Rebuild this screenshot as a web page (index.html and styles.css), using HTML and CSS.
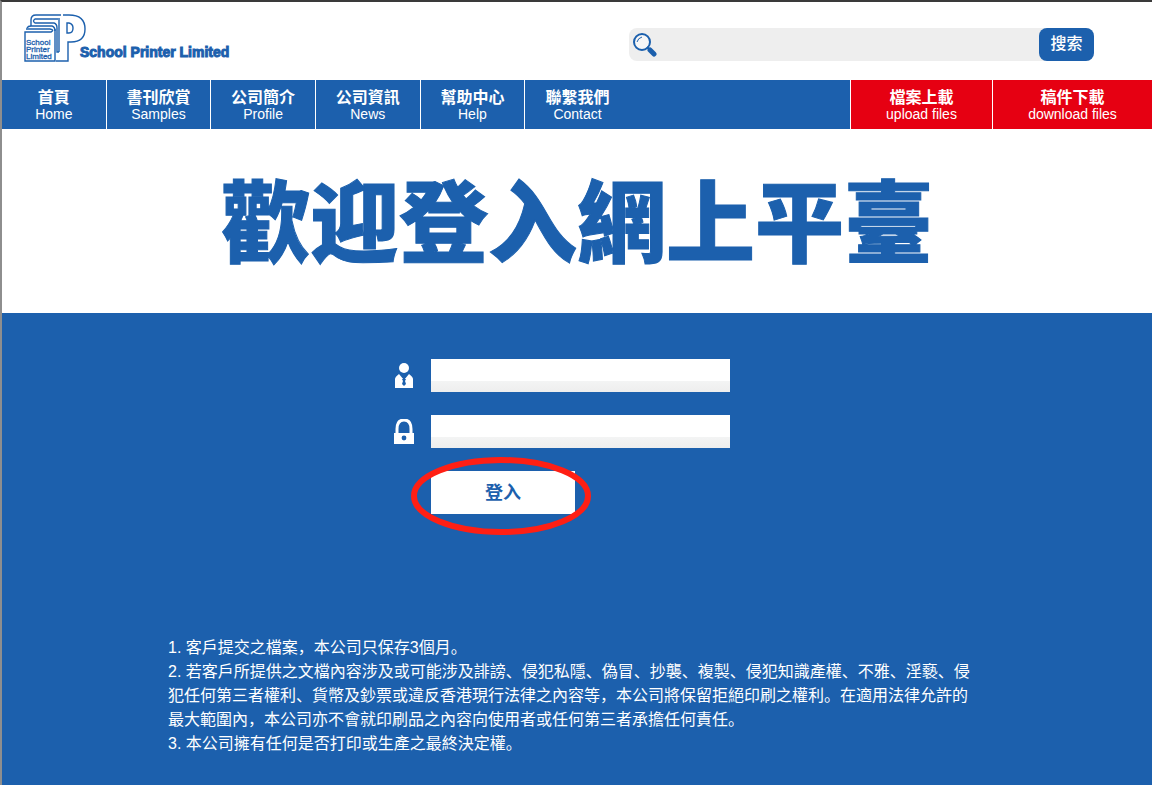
FILE: index.html
```
<!DOCTYPE html>
<html lang="zh">
<head>
    <meta charset="UTF-8">
    <meta name="viewport" content="width=device-width, initial-scale=1.0">
    <title>School Printer Limited</title>
    <link rel="stylesheet" href="styles.css">
</head>
<body>
    <header class="header">
        <a href="#" class="logo">
            <svg class="logo-mark" viewBox="0 0 62 48" aria-hidden="true">
                <g fill="none" stroke="#1c60ad" stroke-width="1.4">
                    <path d="M37 1 H12 Q7 1 7 6 V12"/>
                    <path d="M34 5 H11 Q8 7 11 9 H30 Q33 10 33 14 V38 H35"/>
                    <path d="M35 4 V38"/>
                    <path d="M3 14 Q4 12 7 12 H28 Q31 13 31 17"/>
                    <path d="M2 15 H26 Q31 16 27 18 H1 V47 H31 V15"/>
                    <path d="M39 1 H45 Q61 1 61 15 Q61 28 47 28 H44 V47 H32"/>
                    <path d="M43 9 H45 Q49 10 49 14 Q49 19 45 19 H43 Z"/>
                </g>
                <g class="logo-small">
                    <text x="2" y="31">School</text>
                    <text x="2" y="38">Printer</text>
                    <text x="2" y="45">Limited</text>
                </g>
            </svg>
            <span class="logo-name">School Printer Limited</span>
        </a>
        <form class="search">
            <label for="keyword" class="search-icon" aria-label="搜索">
                <svg viewBox="0 0 24 26" width="24" height="26" aria-hidden="true">
                    <circle cx="9" cy="10" r="8" fill="#fff" fill-opacity="0.5" stroke="#1c60ad" stroke-width="2"/>
                    <path d="M4 10 Q5 6 9 5" fill="none" stroke="#1c60ad" stroke-width="1"/>
                    <path d="M14 15 L16 17" stroke="#1c60ad" stroke-width="2"/>
                    <path d="M17 18 L21 22" stroke="#1c60ad" stroke-width="5" stroke-linecap="round"/>
                </svg>
            </label>
            <input type="text" id="keyword" class="search-input">
            <button type="button" class="search-btn">搜索</button>
        </form>
    </header>

    <nav class="nav">
        <a href="#" class="nav-item"><b>首頁</b>Home</a>
        <a href="#" class="nav-item"><b>書刊欣賞</b>Samples</a>
        <a href="#" class="nav-item"><b>公司簡介</b>Profile</a>
        <a href="#" class="nav-item"><b>公司資訊</b>News</a>
        <a href="#" class="nav-item"><b>幫助中心</b>Help</a>
        <a href="#" class="nav-item last"><b>聯繫我們</b>Contact</a>
        <a href="#" class="nav-file upload"><b>檔案上載</b>upload files</a>
        <a href="#" class="nav-file download"><b>稿件下載</b>download files</a>
    </nav>

    <h1 class="title">歡迎登入網上平臺</h1>

    <main class="panel">
        <form class="login">
            <div class="field">
                <label for="user" aria-label="用戶">
                    <svg viewBox="0 0 22 26" width="22" height="26" aria-hidden="true">
                        <circle cx="11" cy="5" r="5" fill="#fff"/>
                        <path d="M2 25 V16 Q2 14 6 11 L11 17 L16 11 Q20 14 20 16 V25 Z" fill="#fff"/>
                        <path d="M9 16 H13 L12 18 L13 21 L11 23 L9 21 L10 18 Z" fill="#1c60ad"/>
                    </svg>
                </label>
                <input type="text" id="user">
            </div>
            <div class="field">
                <label for="password" aria-label="密碼">
                    <svg viewBox="0 0 22 26" width="22" height="26" aria-hidden="true">
                        <path d="M4 15 V10 Q4 1 11 1 Q18 1 18 10 V15" fill="none" stroke="#fff" stroke-width="3"/>
                        <rect x="1" y="14" width="20" height="11" fill="#fff"/>
                        <circle cx="11" cy="19" r="2.4" fill="#1c60ad"/>
                    </svg>
                </label>
                <input type="password" id="password">
            </div>
            <div class="submit">
                <button type="button">登入</button>
                <svg class="ring" viewBox="0 0 180 78" aria-hidden="true">
                    <ellipse cx="90" cy="39" rx="87" ry="36" fill="none" stroke="#ff1f14" stroke-width="6"/>
                </svg>
            </div>
        </form>

        <div class="notes">
            <p>1. 客戶提交之檔案，本公司只保存3個月。</p>
            <p>2. 若客戶所提供之文檔內容涉及或可能涉及誹謗、侵犯私隱、偽冒、抄襲、複製、侵犯知識產權、不雅、淫褻、侵犯任何第三者權利、貨幣及鈔票或違反香港現行法律之內容等，本公司將保留拒絕印刷之權利。在適用法律允許的最大範圍內，本公司亦不會就印刷品之內容向使用者或任何第三者承擔任何責任。</p>
            <p>3. 本公司擁有任何是否打印或生產之最終決定權。</p>
        </div>
    </main>
</body>
</html>
```
FILE: styles.css
```
* {
    box-sizing: border-box;
}

body {
    display: flex;
    flex-direction: column;
    min-height: 100vh;
    margin: 0;
    border-top: 2px solid #3a3a3a;
    border-left: 2px solid #8e8e8e;
    background: #fff;
    font-family: "Liberation Sans", "Noto Sans CJK SC", sans-serif;
}

a {
    text-decoration: none;
}

.header {
    display: flex;
    justify-content: space-between;
    padding: 12px 58px 0 22px;
    height: 78px;
}

.logo {
    display: flex;
    align-items: flex-start;
    color: #1c60ad;
}

.logo-mark {
    width: 62px;
    height: 48px;
}

.logo-small {
    font-size: 8px;
    fill: #1c60ad;
    stroke: #1c60ad;
    stroke-width: 0.3px;
}

.logo-name {
    margin: 28px 0 0 -6px;
    font-size: 14px;
    font-weight: bold;
    line-height: 20px;
    white-space: nowrap;
    -webkit-text-stroke: 1px #1c60ad;
}

/* search bar */
.search {
    display: flex;
    width: 465px;
    height: 33px;
    margin-top: 14px;
    border-radius: 8px;
    background: #eee;
}

.search-icon {
    padding: 4px 0 0 4px;
}

.search-input {
    flex: 1;
    min-width: 0;
    border: 0;
    outline: none;
    background: transparent;
    font-size: 16px;
}

.search-btn {
    width: 55px;
    padding: 0 0 5px;
    border: 0;
    border-radius: 8px;
    background: #1c60ad;
    color: #fff;
    font-family: "Noto Sans CJK SC", sans-serif;
    font-size: 16px;
    font-weight: 500;
}

/* navigation */
.nav {
    display: flex;
    height: 49px;
    background: #1c60ad;
}

.nav a {
    padding-top: 10px;
    color: #fff;
    font-size: 14px;
    line-height: 16px;
    text-align: center;
}

.nav b {
    display: block;
    font-size: 16px;
    line-height: 16px;
}

.nav-item {
    width: 9.1%;
    border-right: 1px solid #fff;
}

.nav .last {
    border-right: 0;
}

.nav-file {
    border-left: 1px solid #fff;
    background: #e60012;
}

.upload {
    width: 142px;
    margin-left: auto;
}

.download {
    width: 160px;
}

.title {
    margin: 0;
    padding: 23px 0 31px;
    color: #1c60ad;
    font-family: "Noto Sans CJK TC", sans-serif;
    font-size: 89px;
    font-weight: 900;
    line-height: 130px;
    text-align: center;
    -webkit-text-stroke: 1px #1c60ad;
}

/* login */
.panel {
    flex: 1;
    padding: 46px 0 28px;
    background: #1c60ad;
    color: #fff;
}

.login {
    padding-left: 34%;
}

.field {
    display: flex;
    gap: 16px;
    margin-bottom: 23px;
}

.field label {
    height: 33px;
    padding-top: 4px;
}

.field input {
    width: 299px;
    height: 33px;
    padding: 0 8px;
    border: 0;
    background: linear-gradient(#fff 66%, #f3f4f4 66%, #eee);
    font-size: 16px;
}

.submit {
    position: relative;
    width: 144px;
    margin-left: 38px;
}

.submit button {
    width: 100%;
    height: 43px;
    padding: 0 0 3px;
    border: 0;
    background: #fff;
    color: #1c60ad;
    font-family: "Noto Sans CJK SC", sans-serif;
    font-size: 18px;
    font-weight: bold;
}

/* red ring over the button */
.ring {
    position: absolute;
    top: -14px;
    left: -20px;
    width: 180px;
    height: 78px;
    pointer-events: none;
}

.notes {
    max-width: 812px;
    margin: 122px 0 0 166px;
    font-size: 16px;
    line-height: 24px;
}

.notes p {
    margin: 0;
}
```
